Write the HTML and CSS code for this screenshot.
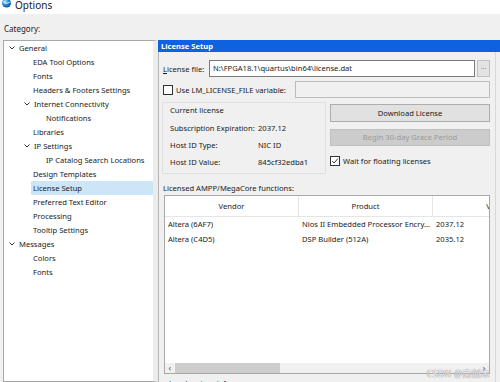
FILE: index.html
```html
<!DOCTYPE html>
<html>
<head>
<meta charset="utf-8">
<link rel="stylesheet" href="styles.css">
</head>
<body>
<div class="titlebar">
  <svg class="appicon" width="11" height="11" viewBox="0 0 11 11">
    <defs>
      <radialGradient id="g" cx="0.35" cy="0.35" r="0.7">
        <stop offset="0" stop-color="#bfe6ff"/>
        <stop offset="0.5" stop-color="#2a8fd6"/>
        <stop offset="1" stop-color="#0b4f94"/>
      </radialGradient>
    </defs>
    <circle cx="5.5" cy="4" r="4.5" fill="url(#g)"/>
    <path d="M2 3 Q5 6 9.5 3" stroke="#e8f6ff" stroke-width="0.8" fill="none"/>
  </svg>
  <span class="title">Options</span>
</div>
<div class="category">Category:</div>
<div class="main">
  <div class="tree">
    <div class="row l0"><svg class="chev" viewBox="0 0 6 4"><path d="M0.5 0.5 L3 3 L5.5 0.5" /></svg>General</div>
    <div class="row l1">EDA Tool Options</div>
    <div class="row l1">Fonts</div>
    <div class="row l1">Headers &amp; Footers Settings</div>
    <div class="row l1c"><svg class="chev" viewBox="0 0 6 4"><path d="M0.5 0.5 L3 3 L5.5 0.5" /></svg>Internet Connectivity</div>
    <div class="row l2">Notifications</div>
    <div class="row l1">Libraries</div>
    <div class="row l1c"><svg class="chev" viewBox="0 0 6 4"><path d="M0.5 0.5 L3 3 L5.5 0.5" /></svg>IP Settings</div>
    <div class="row l2">IP Catalog Search Locations</div>
    <div class="row l1">Design Templates</div>
    <div class="row l1 sel">License Setup</div>
    <div class="row l1">Preferred Text Editor</div>
    <div class="row l1">Processing</div>
    <div class="row l1">Tooltip Settings</div>
    <div class="row l0"><svg class="chev" viewBox="0 0 6 4"><path d="M0.5 0.5 L3 3 L5.5 0.5" /></svg>Messages</div>
    <div class="row l1">Colors</div>
    <div class="row l1">Fonts</div>
  </div>
  <div class="panel">
    <div class="phead">License Setup</div>
    <div class="pbody">
      <div class="filerow">
        <span class="lbl"><u>L</u>icense file:</span>
        <div class="textbox">N:\FPGA18.1\quartus\bin64\license.dat</div>
        <div class="browse">...</div>
      </div>
      <div class="envrow">
        <span class="check"></span>
        <span class="lbl envlbl">Use LM_LICENSE_FILE variable:</span>
        <div class="textbox disabled"></div>
      </div>
      <div class="cols">
        <div class="group">
          <div class="gtitle">Current license</div>
          <div class="kv first"><span class="k">Subscription Expiration:</span><span>2037.12</span></div>
          <div class="kv"><span class="k">Host ID Type:</span><span>NIC ID</span></div>
          <div class="kv"><span class="k">Host ID Value:</span><span>845cf32edba1</span></div>
        </div>
        <div class="actions">
          <div class="btn">Download License</div>
          <div class="btn off">Begin 30-day Grace Period</div>
          <div class="waitrow">
            <span class="check on"><svg viewBox="0 0 10 10" width="8" height="8"><path d="M1.5 5 L4 7.5 L8.5 2" fill="none" stroke="#222" stroke-width="1.1"/></svg></span>
            <span>Wait for floating licenses</span>
          </div>
        </div>
      </div>
      <div class="tlabel">Licensed AMPP/MegaCore functions:</div>
      <div class="table">
        <div class="thead">
          <div class="th">Vendor</div>
          <div class="th">Product</div>
          <div class="th">Version</div>
        </div>
        <div class="tbody">
          <div class="tr"><div class="td">Altera (6AF7)</div><div class="td">Nios II Embedded Processor Encry...</div><div class="td">2037.12</div></div>
          <div class="tr"><div class="td">Altera (C4D5)</div><div class="td">DSP Builder (512A)</div><div class="td">2035.12</div></div>
        </div>
        <div class="hscroll">
          <span class="arrow">&#8249;</span>
          <div class="track"><div class="thumb"></div></div>
          <span class="arrow">&#8250;</span>
        </div>
      </div>
      <div class="local">Local system info</div>
    </div>
  </div>
</div>
<div class="watermark">CSDN @南创木</div>
</body>
</html>
```

FILE: styles.css
```css
* { box-sizing: border-box; }
html, body { margin: 0; padding: 0; }
body {
  width: 500px;
  height: 382px;
  overflow: hidden;
  background: #f0f0f0;
  font-family: "Noto Sans", "Open Sans", "Noto Sans CJK SC", sans-serif;
  font-size: 7.6px;
  color: #1a1a1a;
  position: relative;
}
.titlebar {
  height: 14px;
  background: #ffffff;
  display: flex;
  align-items: flex-start;
  padding-left: 1px;
}
.appicon { margin-top: -1px; }
.title {
  margin-left: 3px;
  font-size: 10px;
  line-height: 10px;
  color: #222;
}
.category {
  height: 26px;
  padding: 10px 0 0 4px;
  line-height: 10px;
  font-size: 8px;
}
.main {
  display: flex;
  padding-left: 3px;
  height: 342px;
}
.tree {
  width: 155px;
  flex: none;
  background: #ffffff;
  border: 1px solid #a8a8a8;
  border-right: 5px solid #ececec;
  box-shadow: 1px 0 0 #b0b0b0;
}
.row {
  height: 14px;
  line-height: 14px;
  white-space: nowrap;
  display: flex;
  align-items: center;
}
.l0 { padding-left: 4px; }
.l1 { padding-left: 29px; }
.l1c { padding-left: 19px; }
.l2 { padding-left: 42px; }
.sel { background: #cde6f7; margin-left: 27px; padding-left: 2px; }
.chev {
  width: 6px;
  height: 4px;
  margin-right: 4px;
  margin-left: 1px;
}
.chev path { fill: none; stroke: #333; stroke-width: 1; }
.panel {
  flex: 1;
  min-width: 0;
  display: flex;
  flex-direction: column;
  margin-left: 0;
}
.phead {
  height: 12px;
  line-height: 12px;
  background: #0e62de;
  color: #ffffff;
  font-weight: bold;
  padding-left: 3px;
}
.pbody {
  flex: 1;
  border-left: 1px solid #b4b4b4;
  padding: 8px 3px 0 4px;
  margin-right: 4px;
  border-right: 1px solid #d8d8d8;
}
.filerow {
  display: flex;
  align-items: center;
  height: 17px;
}
.lbl { width: 46px; flex: none; white-space: nowrap; }
.textbox {
  height: 17px;
  width: 266px;
  flex: none;
  background: #ffffff;
  border: 1px solid #7a7a7a;
  line-height: 15px;
  padding-left: 3px;
  white-space: nowrap;
}
.browse {
  margin-left: 2px;
  width: 13px;
  flex: none;
  height: 17px;
  background: #e3e3e3;
  border: 1px solid #c0c0c0;
  color: #888;
  text-align: center;
  line-height: 12px;
  font-size: 7px;
}
.envrow {
  display: flex;
  align-items: center;
  height: 17px;
  margin-top: 4px;
  width: 327px;
}
.check {
  width: 10px;
  height: 10px;
  border: 1px solid #333;
  background: #fff;
  display: inline-flex;
  align-items: center;
  justify-content: center;
  flex: none;
}
.envlbl { width: auto; margin-left: 3px; }
.textbox.disabled {
  width: 195px;
  margin-left: auto;
  background: #f0f0f0;
  border-color: #bcbcbc;
}
.cols {
  display: flex;
  margin-top: 3px;
  height: 76px;
}
.group {
  width: 164px;
  flex: none;
  margin-left: -1px;
  border: 1px solid #e0e0e0;
  padding: 2px 0 0 7px;
  height: 72px;
  margin-top: 1px;
}
.gtitle { line-height: 10px; }
.kv {
  display: flex;
  height: 17px;
  line-height: 17px;
}
.kv.first { margin-top: 5px; }
.kv .k { width: 88px; white-space: nowrap; }
.actions {
  margin-left: 4px;
  width: 160px;
  flex: none;
  padding-top: 3px;
}
.btn {
  height: 18px;
  line-height: 16px;
  text-align: center;
  background: #e1e1e1;
  border: 1px solid #adadad;
}
.btn.off {
  margin-top: 7px;
  height: 17px;
  line-height: 15px;
  background: #cccccc;
  border-color: #bfbfbf;
  color: #9a9a9a;
}
.waitrow {
  display: flex;
  align-items: center;
  gap: 3px;
  margin-top: 10px;
  height: 10px;
}
.tlabel {
  margin-top: 6px;
  line-height: 10px;
  height: 10px;
}
.table {
  margin-top: 2px;
  margin-left: 1px;
  width: 326px;
  height: 179px;
  background: #ffffff;
  border: 1px solid #a8a8a8;
  overflow: hidden;
  display: flex;
  flex-direction: column;
}
.thead {
  display: flex;
  height: 21px;
  line-height: 21px;
  border-bottom: 1px solid #e5e5e5;
  white-space: nowrap;
}
.th {
  width: 134px;
  flex: none;
  text-align: center;
  border-right: 1px solid #e5e5e5;
}
.tbody { flex: 1; }
.tr { display: flex; height: 15px; line-height: 15px; white-space: nowrap; }
.td { width: 134px; flex: none; padding-left: 3px; overflow: hidden; }
.hscroll {
  height: 10px;
  display: flex;
  align-items: center;
  background: #f0f0f0;
}
.arrow {
  width: 10px;
  text-align: center;
  font-size: 9px;
  line-height: 10px;
  color: #555;
}
.track { flex: 1; height: 10px; }
.thumb { width: 105px; height: 10px; background: #cdcdcd; }
.local {
  margin-top: 4px;
  padding-left: 6px;
  line-height: 10px;
}
.watermark {
  position: absolute;
  right: 10px;
  bottom: 2px;
  font-size: 9px;
  color: rgba(255,255,255,0.9);
  text-shadow: 0 0 1px #888, 0 0 1px #888;
  letter-spacing: 0.2px;
}
```
